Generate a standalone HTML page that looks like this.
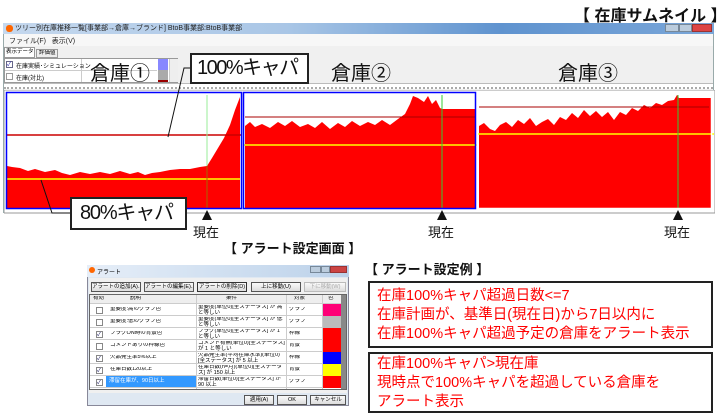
<!DOCTYPE html>
<html><head><meta charset="utf-8">
<style>
*{margin:0;padding:0;box-sizing:border-box}
body{width:720px;height:417px;background:#fff;position:relative;overflow:hidden;font-family:"Liberation Sans","Noto Sans CJK JP",sans-serif;}
.a{position:absolute}
.t{white-space:nowrap}
.red{color:#f00}
.box{border:2px solid #222;background:#fff}
.btn{position:absolute;height:10px;border:1px solid #555;background:linear-gradient(#fafafa,#ddd);font-size:5.5px;line-height:8px;text-align:center;white-space:nowrap;overflow:hidden}
.row{position:absolute;left:0;width:257px;height:12px;border-bottom:1px solid #ccc;font-size:5.5px;line-height:5.5px}
.row div{position:absolute;top:1px;overflow:hidden}
.row .c{left:108px;width:87px;height:11px}
.row .d{left:20px;top:3px;width:85px;white-space:nowrap}
.row .o{left:199px;top:3px;width:32px}
.cb{position:absolute;left:6px;top:3px !important;width:7px;height:7px;border:1px solid #888;background:#fff;font-size:6px;line-height:6px;color:#226}
</style></head><body>

<div class="a t" style="left:574px;top:2px;font-size:16px;font-weight:bold;color:#111">【 在庫サムネイル 】</div>

<!-- window -->
<div class="a" style="left:3px;top:23px;width:711px;height:190px;border:1px solid #9aa;background:#f0f0f0"></div>
<div class="a" style="left:3px;top:23px;width:711px;height:11px;background:linear-gradient(90deg,#c5d8ee,#a9c6e6 40%,#5f93cf 70%,#7aa6d8)"></div>
<div class="a" style="left:6px;top:25px;width:7px;height:7px;background:#f60;border-radius:3px"></div>
<div class="a t" style="left:15px;top:24px;font-size:7px;line-height:9px;color:#222">ツリー別在庫推移一覧[事業部→倉庫→ブランド] BtoB事業部:BtoB事業部</div>
<div class="a" style="left:665px;top:24px;width:14px;height:8px;background:#bcd;border:1px solid #789"></div>
<div class="a" style="left:679px;top:24px;width:13px;height:8px;background:#bcd;border:1px solid #789"></div>
<div class="a" style="left:692px;top:24px;width:20px;height:8px;background:#d44;border:1px solid #933"></div>
<div class="a" style="left:4px;top:34px;width:709px;height:12px;background:#f7f7f7"></div>
<div class="a t" style="left:9px;top:36px;font-size:7px;color:#222">ファイル(F)&nbsp;&nbsp;&nbsp;表示(V)</div>
<div class="a t" style="left:4px;top:47px;width:31px;height:11px;border:1px solid #999;background:#fff;font-size:5.5px;line-height:9px;padding-left:1px;overflow:hidden">表示データ</div>
<div class="a t" style="left:36px;top:49px;width:22px;height:9px;border:1px solid #999;background:#eee;font-size:5.5px;line-height:7px;padding-left:2px;overflow:hidden">評価値</div>
<div class="a" style="left:4px;top:58px;width:174px;height:25px;border:1px solid #999;background:#fff"></div>
<div class="a" style="left:5px;top:70px;width:152px;height:1px;background:#ccc"></div>
<div class="a" style="left:81px;top:59px;width:1px;height:23px;background:#ccc"></div>
<div class="a" style="left:6px;top:61px;width:7px;height:7px;border:1px solid #668;background:#fff;font-size:6px;line-height:6px;color:#22a">✓</div>
<div class="a" style="left:6px;top:73px;width:7px;height:7px;border:1px solid #999;background:#fff"></div>
<div class="a t" style="left:16px;top:61px;font-size:6px">在庫実績･シミュレーション</div>
<div class="a t" style="left:16px;top:73px;font-size:6px">在庫(対比)</div>
<div class="a" style="left:158px;top:59px;width:10px;height:23px;background:#88f"></div>
<div class="a" style="left:158px;top:70px;width:10px;height:12px;background:#aaa"></div>
<div class="a" style="left:158px;top:80px;width:10px;height:2px;background:#900"></div>
<div class="a" style="left:169px;top:59px;width:9px;height:23px;background:#eee;border-left:1px solid #ccc"></div>
<div class="a" style="left:4px;top:83px;width:709px;height:6px;background:#fff;border-top:1px solid #bbb;border-bottom:2px dotted #aaa"></div>
<div class="a t" style="left:90px;top:62px;font-size:20px;line-height:24px;color:#111">倉庫①</div>
<div class="a t" style="left:331px;top:62px;font-size:20px;line-height:24px;color:#111">倉庫②</div>
<div class="a t" style="left:558px;top:62px;font-size:20px;line-height:24px;color:#111">倉庫③</div>

<!-- charts -->
<svg class="a" style="left:4px;top:90px" width="711" height="124" viewBox="4 90 711 124">
<rect x="4" y="90" width="711" height="123" fill="#fff" stroke="#999"/>
<polygon fill="#f00" points="7,166 12,167 20,168 28,171 35,169 45,172 55,170 62,173 70,175 80,172 90,174 100,172 110,174 120,171 130,174 138,172 145,175 152,173 160,172 170,170 180,169 190,169 200,167 207,166 212,158 218,148 224,138 230,125 235,110 240,97 240,208 7,208"/>
<line x1="7" y1="135" x2="241" y2="135" stroke="#c00" stroke-width="1.5"/>
<line x1="7" y1="179" x2="240" y2="179" stroke="#ff0" stroke-width="1.5"/>
<line x1="207" y1="95" x2="207" y2="208" stroke="#9e9" stroke-width="1"/>
<line x1="207" y1="166" x2="207" y2="208" stroke="#a60" stroke-width="1"/>
<rect x="6.5" y="92.5" width="235" height="116" fill="none" stroke="#00f" stroke-width="1.5"/>
<polygon fill="#f00" points="245,126 250,122 255,127 262,124 270,128 278,122 285,126 292,121 300,127 308,124 315,128 322,122 330,129 338,123 345,127 352,121 360,126 368,122 375,125 382,120 390,125 398,119 405,114 410,104 413,96 418,98 424,102 428,96 432,104 436,100 440,108 442,109 476,109 476,208 245,208"/>
<line x1="245" y1="117" x2="475" y2="117" stroke="#a00" stroke-width="1"/>
<line x1="243" y1="145" x2="478" y2="145" stroke="#ff0" stroke-width="1.5"/>
<line x1="442" y1="95" x2="442" y2="208" stroke="#3c3" stroke-width="1"/>
<rect x="243.5" y="92.5" width="232" height="116" fill="none" stroke="#00f" stroke-width="1.5"/>
<polygon fill="#f00" points="479,126 484,123 490,129 495,131 500,125 506,122 512,127 518,120 524,124 530,118 536,126 542,122 548,119 554,125 560,117 566,120 572,113 578,118 584,110 590,116 596,111 602,117 608,112 614,120 620,112 626,115 632,108 638,111 644,105 650,108 656,103 662,105 668,101 674,100 677,95 679,98 711,98 711,208 479,208"/>
<line x1="479" y1="107" x2="709" y2="107" stroke="#a00" stroke-width="1"/>
<line x1="478" y1="134" x2="714" y2="134" stroke="#ff0" stroke-width="1.5"/>
<line x1="678" y1="95" x2="678" y2="208" stroke="#3c3" stroke-width="1"/>
<rect x="477.5" y="92.5" width="234" height="116" fill="none" stroke="#fff" stroke-width="1.5"/>
</svg>

<svg class="a" style="left:0;top:0" width="720" height="417">
<polyline points="192,68 184,68 168,137" fill="none" stroke="#111" stroke-width="1"/>
<polyline points="70,213 52,213 41,180" fill="none" stroke="#111" stroke-width="1"/>
<polygon points="207,210 202,220 212,220" fill="#111"/>
<polygon points="442,210 437,220 447,220" fill="#111"/>
<polygon points="678,210 673,220 683,220" fill="#111"/>
</svg>
<div class="a box t" style="left:190px;top:53px;width:119px;height:31px;font-size:20px;line-height:27px;padding-left:5px;letter-spacing:-1.5px;color:#111;overflow:hidden">100%キャパ</div>
<div class="a box t" style="left:70px;top:197px;width:117px;height:33px;font-size:20px;line-height:29px;padding-left:8px;letter-spacing:-1.2px;color:#111;overflow:hidden">80%キャパ</div>
<div class="a t" style="left:193px;top:222px;font-size:13px;color:#111">現在</div>
<div class="a t" style="left:428px;top:222px;font-size:13px;color:#111">現在</div>
<div class="a t" style="left:664px;top:222px;font-size:13px;color:#111">現在</div>

<div class="a t" style="left:224px;top:238px;font-size:13px;font-weight:bold;color:#111">【 アラート設定画面 】</div>

<!-- dialog -->
<div class="a" style="left:87px;top:265px;width:262px;height:141px;background:#dfe8f2;border:1px solid #889"></div>
<div class="a" style="left:87px;top:265px;width:262px;height:12px;background:linear-gradient(90deg,#e6eef8,#bcd2ea)"></div>
<div class="a" style="left:89px;top:267px;width:6px;height:6px;background:#f60;border-radius:3px"></div>
<div class="a t" style="left:97px;top:267px;font-size:6px">アラート</div>
<div class="a" style="left:310px;top:266px;width:11px;height:7px;background:#bcd;border:1px solid #789"></div>
<div class="a" style="left:321px;top:266px;width:9px;height:7px;background:#bcd;border:1px solid #789"></div>
<div class="a" style="left:330px;top:266px;width:17px;height:7px;background:#c44;border:1px solid #933"></div>
<div class="a" style="left:89px;top:278px;width:258px;height:115px;background:#f0f0f0"></div>
<div class="btn" style="left:91px;top:282px;width:50px">アラートの追加(A)...</div>
<div class="btn" style="left:144px;top:282px;width:50px">アラートの編集(E)...</div>
<div class="btn" style="left:197px;top:282px;width:50px;border-color:#333">アラートの削除(D)</div>
<div class="btn" style="left:251px;top:282px;width:50px">上に移動(U)</div>
<div class="btn" style="left:304px;top:282px;width:42px;color:#aaa;border-color:#bbb">下に移動(W)</div>
<div class="a" style="left:89px;top:294px;width:258px;height:96px;background:#fff;border:1px solid #666;overflow:hidden">
 <div class="row" style="top:0;height:9px;background:#eee;text-align:center">
  <div style="left:3px">有効</div><div style="left:40px">説明</div><div style="left:136px">条件</div><div style="left:204px">対象</div><div style="left:238px">色</div></div>
 <div class="row" style="top:9px"><div class="cb"></div><div class="d">重要度:高のグラフ色</div><div class="c">重要度(単位0)[全ステータス] が 高 と等しい</div><div class="o">グラフ</div></div>
 <div class="row" style="top:21px"><div class="cb"></div><div class="d">重要度:低のグラフ色</div><div class="c">重要度(単位0)[全ステータス] が 低 と等しい</div><div class="o">グラフ</div></div>
 <div class="row" style="top:33px"><div class="cb">✓</div><div class="d">フラグON時の背景色</div><div class="c">フラグ(単位0)[全ステータス] が 1 と等しい</div><div class="o">枠線</div></div>
 <div class="row" style="top:45px"><div class="cb"></div><div class="d">コメントありの枠線色</div><div class="c">コメント有無(単位0)[全ステータス] が 1 と等しい</div><div class="o">背景</div></div>
 <div class="row" style="top:57px"><div class="cb">✓</div><div class="d">欠品発生率5%以上</div><div class="c">欠品発生率(平均在庫水準)(単位0)[全ステータス] が 5 以上</div><div class="o">枠線</div></div>
 <div class="row" style="top:69px"><div class="cb">✓</div><div class="d">在庫日数120以上</div><div class="c">在庫日数(n=月)(単位0)[全ステータス] が 150 以上</div><div class="o">背景</div></div>
 <div class="row" style="top:81px"><div class="cb">✓</div><div class="d" style="left:16px;top:0;width:91px;height:11px;background:#39f;color:#fff;padding:3px 0 0 3px">滞留在庫が、90日以上</div><div class="c">滞留日数(単位0)[全ステータス] が 90 以上</div><div class="o">グラフ</div></div>
 <div class="a" style="left:106px;top:0;width:1px;height:96px;background:#ccc"></div>
 <div class="a" style="left:196px;top:0;width:1px;height:96px;background:#ccc"></div>
 <div class="a" style="left:232px;top:0;width:1px;height:96px;background:#ccc"></div>
 <div class="a" style="left:233px;top:9px;width:18px;height:12px;background:#f07"></div>
 <div class="a" style="left:233px;top:21px;width:18px;height:12px;background:#bbb"></div>
 <div class="a" style="left:233px;top:33px;width:18px;height:12px;background:#f00"></div>
 <div class="a" style="left:233px;top:45px;width:18px;height:12px;background:#f00"></div>
 <div class="a" style="left:233px;top:57px;width:18px;height:12px;background:#00f"></div>
 <div class="a" style="left:233px;top:69px;width:18px;height:12px;background:#ff0"></div>
 <div class="a" style="left:233px;top:81px;width:18px;height:12px;background:#f00"></div>
 <div class="a" style="left:251px;top:0;width:6px;height:96px;background:#888"></div>
</div>
<div class="btn" style="left:244px;top:395px;width:30px">適用(A)</div>
<div class="btn" style="left:277px;top:395px;width:30px">OK</div>
<div class="btn" style="left:310px;top:395px;width:36px">キャンセル</div>

<div class="a t" style="left:365px;top:259px;font-size:13px;font-weight:bold;color:#111">【 アラート設定例 】</div>
<div class="a box" style="left:368px;top:281px;width:345px;height:67px"></div>
<div class="a t red" style="left:377px;top:287px;font-size:14.5px;line-height:19px">在庫100%キャパ超過日数&lt;=7<br>在庫計画が、基準日(現在日)から7日以内に<br>在庫100%キャパ超過予定の倉庫をアラート表示</div>
<div class="a box" style="left:368px;top:352px;width:345px;height:61px"></div>
<div class="a t red" style="left:377px;top:355px;font-size:14.5px;line-height:19px">在庫100%キャパ&gt;現在庫<br>現時点で100%キャパを超過している倉庫を<br>アラート表示</div>

</body></html>
